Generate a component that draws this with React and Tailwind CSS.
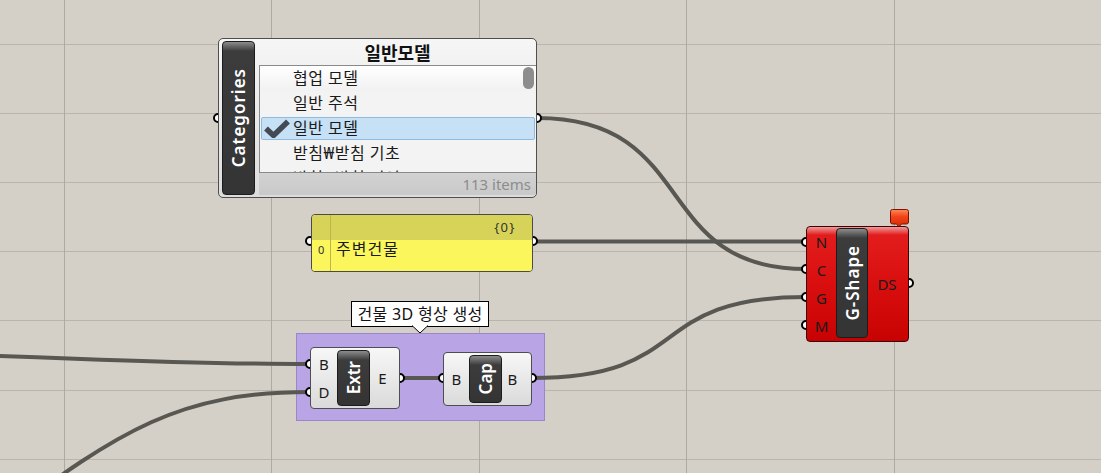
import React from 'react';

const H_LINES = [44, 113, 182, 251, 320, 390, 459];
const V_LINES = [64, 271, 479, 686, 894];

const WIRES = [
  'M537 118 C 700 118, 650 269, 806 269',
  'M533 241.5 L 806 241.5',
  'M532 378 C 696 378, 643 297, 806 297',
  'M400 378 L 443 378',
  'M-150 352 C 60 356, 150 364, 310 364',
  'M0 520 C 120 430, 180 392, 310 392',
];

const GRIPS = [
  [218, 118], [537, 118],
  [310, 241], [533, 241],
  [806, 242], [806, 269], [806, 297], [806, 325], [909, 283],
  [310, 364], [310, 392], [400, 378],
  [443, 378], [532, 378],
];

const LIST = ['협업 모델', '일반 주석', '일반 모델', '받침₩받침 기초', '받침₩받침 피어'];

function Capsule({ label, className = '' }) {
  return (
    <div
      className={`shrink-0 rounded-[4px] border border-[#1c1c1c] bg-[linear-gradient(to_bottom,#8c8c8c,#3c3c3c_9px,#343434)] flex items-center justify-center ${className}`}
    >
      <span className="[writing-mode:vertical-rl] rotate-180 text-white font-semibold leading-none">
        {label}
      </span>
    </div>
  );
}

function CategoriesNode() {
  return (
    <div className="absolute left-[218px] top-[38px] w-[319px] h-[160px] rounded-[5px] border border-[#4e4e4e] bg-[linear-gradient(to_bottom,#f6f6f6,#dcdcdc)] flex pl-[3px] py-[2px]">
      <Capsule label="Categories" className="w-[33px] h-full text-[17px] tracking-[1px]" />
      <div className="flex-1 min-w-0 flex flex-col ml-[4px]">
        <div className="h-[24px] flex items-center justify-center text-[18px] font-bold text-[#111] leading-none">
          일반모델
        </div>
        <div className="relative h-[108px] border border-r-0 border-[#8a8a8a] bg-[#f3f3f3] overflow-hidden">
          {LIST.map((item, i) => {
            const selected = i === 2;
            return (
              <div
                key={item}
                className={`h-[25px] px-[1px] py-[1px] ${i === 0 ? 'bg-[linear-gradient(to_bottom,#ffffff,#f1f1f1)]' : ''}`}
              >
                <div
                  className={`h-full flex items-center pl-[2px] gap-[3px] rounded-[2px] ${
                    selected ? 'bg-[#c6e0f6] border border-[#8fbbe0]' : 'border border-transparent'
                  }`}
                >
                  <div className="w-[26px] flex items-center justify-center">
                    {selected && (
                      <svg width="26" height="19" viewBox="0 0 26 19">
                        <path d="M2 9.5 L9.5 16.5 L24 2.5" fill="none" stroke="#434a54" strokeWidth="5.5" strokeLinejoin="miter" />
                      </svg>
                    )}
                  </div>
                  <span className="text-[16px] text-[#1a1a1a] leading-none tracking-[0.5px]">{item}</span>
                </div>
              </div>
            );
          })}
          <div className="absolute right-[2px] top-[1px] w-[11px] h-[22px] rounded-full bg-[#8d8d8d]" />
        </div>
        <div className="flex-1 flex items-center justify-end pr-[5px] text-[15px] text-[#8c8c8c] bg-[linear-gradient(to_bottom,#d2d2d2,#c9c9c9)]">
          113 items
        </div>
      </div>
    </div>
  );
}

function PanelNode() {
  return (
    <div className="absolute left-[311px] top-[214px] w-[222px] h-[58px] rounded-[4px] border border-[#4a4a4a] overflow-hidden flex">
      <div className="w-[19px] flex flex-col border-r border-[#bcb74a]">
        <div className="h-[25px] bg-[#d6d358]" />
        <div className="flex-1 bg-[#faf65c] pl-[6px] pt-[2px] text-[11px] leading-[16px] text-[#333]">0</div>
      </div>
      <div className="flex-1 flex flex-col">
        <div className="h-[25px] bg-[#d6d358] flex items-center justify-end pr-[16px] text-[13px] text-[#333] tracking-[1.5px]">
          {'{0}'}
        </div>
        <div className="flex-1 bg-[#faf65c] pl-[5px] pt-[1px] text-[16px] leading-[16px] tracking-[1px] text-[#1a1a1a]">
          주변건물
        </div>
      </div>
    </div>
  );
}

function GShapeNode() {
  return (
    <>
      <svg className="absolute left-[888px] top-[208px]" width="22" height="20" viewBox="0 0 22 20">
        <defs>
          <linearGradient id="bal" x1="0" y1="0" x2="0" y2="1">
            <stop offset="0" stopColor="#ff8a5a" />
            <stop offset="0.4" stopColor="#f2441a" />
            <stop offset="1" stopColor="#d42a00" />
          </linearGradient>
        </defs>
        <path d="M4.5 1.5 H18.5 Q20.5 1.5 20.5 3.5 V14 Q20.5 16 18.5 16 H13.5 L11 19 L8.5 16 H4.5 Q2.5 16 2.5 14 V3.5 Q2.5 1.5 4.5 1.5 Z" fill="url(#bal)" stroke="#7a1400" strokeWidth="1" />
      </svg>
      <div className="absolute left-[806px] top-[226px] w-[103px] h-[116px] rounded-[4px] border border-[#3c0505] bg-[linear-gradient(to_bottom,#f19a9a,#e21c1c_8px,#d90f0f_50%,#c80202)] flex py-[1px]">
        <div className="w-[29px] flex flex-col text-[15px] text-[#1a1a1a]">
          {['N', 'C', 'G', 'M'].map((p) => (
            <div key={p} className="flex-1 flex items-center justify-center">{p}</div>
          ))}
        </div>
        <Capsule label="G-Shape" className="w-[32px] h-[110px] text-[17px] tracking-[1px]" />
        <div className="flex-1 flex items-center justify-center text-[15px] text-[#1a1a1a] pr-[2px]">DS</div>
      </div>
    </>
  );
}

function GroupArea() {
  return (
    <>
      <div className="absolute left-[296px] top-[333px] w-[249px] h-[88px] bg-[#b9a5e6] border border-[#9a86cc]" />
      <div className="absolute left-[351px] top-[301px] w-[138px] h-[26px] bg-white border border-black flex items-center justify-center text-[16px] text-[#111] tracking-[0.3px]">
        건물 3D 형상 생성
      </div>
      <svg className="absolute left-[410px] top-[325px]" width="20" height="10" viewBox="0 0 20 10">
        <path d="M2 0.5 L10 8 L18 0.5" fill="#fff" stroke="#000" strokeWidth="1" />
        <rect x="3" y="0" width="14" height="1.2" fill="#fff" />
      </svg>
    </>
  );
}

function ExtrNode() {
  return (
    <div className="absolute left-[310px] top-[347px] w-[90px] h-[62px] rounded-[4px] border border-[#4e4e4e] bg-[linear-gradient(to_bottom,#f7f7f7,#dadada)] flex items-center">
      <div className="w-[26px] h-full flex flex-col py-[2px] text-[15px] text-[#1a1a1a]">
        <div className="flex-1 flex items-center justify-center">B</div>
        <div className="flex-1 flex items-center justify-center">D</div>
      </div>
      <Capsule label="Extr" className="w-[33px] h-[56px] text-[17px]" />
      <div className="flex-1 flex items-center justify-center pr-[4px] text-[15px] text-[#1a1a1a]">E</div>
    </div>
  );
}

function CapNode() {
  return (
    <div className="absolute left-[443px] top-[352px] w-[89px] h-[54px] rounded-[4px] border border-[#4e4e4e] bg-[linear-gradient(to_bottom,#f7f7f7,#dadada)] flex items-center">
      <div className="w-[25px] flex items-center justify-center text-[15px] text-[#1a1a1a]">B</div>
      <Capsule label="Cap" className="w-[33px] h-[48px] text-[17px]" />
      <div className="flex-1 flex items-center justify-center pr-[8px] text-[15px] text-[#1a1a1a]">B</div>
    </div>
  );
}

export default function App() {
  return (
    <div className="relative w-[1101px] h-[473px] overflow-hidden bg-[#d4d0c8] font-['Noto_Sans','Noto_Sans_CJK_KR',sans-serif]">
      {/* canvas grid */}
      <svg className="absolute inset-0" width="1101" height="473">
        {H_LINES.map((y) => (
          <line key={`h${y}`} x1="0" x2="1101" y1={y + 0.5} y2={y + 0.5} stroke="#b9b5ad" strokeWidth="1" />
        ))}
        {V_LINES.map((x) => (
          <line key={`v${x}`} y1="0" y2="473" x1={x + 0.5} x2={x + 0.5} stroke="#aeaaa2" strokeWidth="1" />
        ))}
      </svg>

      <GroupArea />

      {/* wires and grips */}
      <svg className="absolute inset-0" width="1101" height="473">
        {WIRES.map((d) => (
          <path key={d} d={d} fill="none" stroke="#585752" strokeWidth="4" />
        ))}
        {GRIPS.map(([x, y]) => (
          <circle key={`${x}-${y}`} cx={x} cy={y} r="4" fill="#fff" stroke="#000" strokeWidth="2" />
        ))}
      </svg>

      <CategoriesNode />
      <PanelNode />
      <GShapeNode />
      <ExtrNode />
      <CapNode />
    </div>
  );
}
